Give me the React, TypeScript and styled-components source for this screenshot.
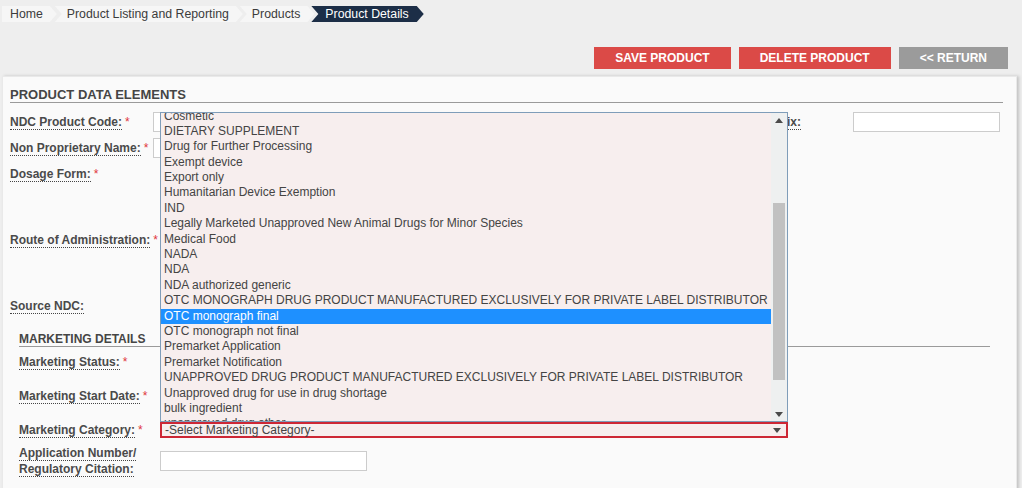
import React from 'react';
import styled, { createGlobalStyle } from 'styled-components';

const GlobalStyle = createGlobalStyle`
  html, body { margin: 0; padding: 0; background: #eeeeee; }
  body {
    font-family: "Liberation Sans", Arial, sans-serif;
    font-size: 12px;
    color: #444;
    overflow: hidden;
  }
  * { box-sizing: border-box; }
`;

const Page = styled.div`
  width: 1022px;
  height: 488px;
  overflow: hidden;
`;

const Breadcrumbs = styled.nav`
  display: flex;
  align-items: center;
  padding: 6px 0 0 2px;
`;

const Crumb = styled.span<{ $active?: boolean; $first?: boolean }>`
  display: flex;
  align-items: center;
  height: 16px;
  padding: 0 ${(p) => (p.$active ? 15 : 14)}px 0
    ${(p) => (p.$first ? 8 : p.$active ? 14 : 12)}px;
  margin-right: ${(p) => (p.$active ? 0 : p.$first ? -2 : -3)}px;
  font-size: 12.3px;
  white-space: nowrap;
  background: ${(p) => (p.$active ? '#1c2e47' : '#f6f6f6')};
  color: ${(p) => (p.$active ? '#ffffff' : '#3c3c3c')};
  clip-path: polygon(
    0 0,
    calc(100% - 7px) 0,
    100% 50%,
    calc(100% - 7px) 100%,
    0 100%,
    ${(p) => (p.$first ? '0' : '7px')} 50%
  );
`;

const ButtonBar = styled.div`
  display: flex;
  justify-content: flex-end;
  gap: 8px;
  margin-top: 25px;
  padding-right: 14px;
`;

const ActionButton = styled.button<{ $variant: 'danger' | 'muted' }>`
  height: 22px;
  padding: 0 21px;
  border: none;
  border-radius: 0;
  font-family: "Liberation Sans", Arial, sans-serif;
  font-size: 12px;
  font-weight: bold;
  color: #ffffff;
  background: ${(p) => (p.$variant === 'danger' ? '#db4a47' : '#9b9b9b')};
  cursor: pointer;
`;

const Panel = styled.section`
  margin: 7px 5px 0 2px;
  min-height: 420px;
  padding: 11px 13px 0 7px;
  background: #fafafa;
  border: 1px solid #e9e9e9;
  box-shadow: 2px 0 3px rgba(0, 0, 0, 0.18);
`;

const SectionTitle = styled.h2<{ $size?: number }>`
  margin: 0;
  font-size: ${(p) => p.$size ?? 13}px;
  line-height: 14px;
  font-weight: bold;
  color: #454545;
  text-transform: uppercase;
  border-bottom: 1px solid #9a9a9a;
`;

const Fields = styled.div`
  display: flex;
  flex-direction: column;
  gap: 6px;
  margin-top: 9px;
`;

const Row = styled.div<{ $h?: number; $align?: 'start' | 'center'; $mt?: number }>`
  display: flex;
  align-items: ${(p) => (p.$align === 'start' ? 'flex-start' : 'center')};
  min-height: ${(p) => p.$h ?? 20}px;
  margin-top: ${(p) => p.$mt ?? 0}px;
`;

const LabelCell = styled.label<{ $w: number }>`
  display: flex;
  align-items: center;
  flex-shrink: 0;
  width: ${(p) => p.$w}px;
  min-height: 20px;
  line-height: 16px;
  font-size: 12px;
  font-weight: bold;
  color: #4a4a4a;
`;

const LabelText = styled.div`
  white-space: nowrap;
`;

const FieldLabel = styled.span`
  border-bottom: 1px dotted #444;
`;

const Req = styled.span`
  margin-left: 3px;
  color: #e0353b;
  font-weight: normal;
`;

const TextInput = styled.input<{ $w: number; $ml?: number }>`
  width: ${(p) => p.$w}px;
  height: 20px;
  margin-left: ${(p) => p.$ml ?? 0}px;
  padding: 0 3px;
  border: 1px solid #cccccc;
  background: #ffffff;
  font-family: "Liberation Sans", Arial, sans-serif;
  font-size: 12px;
  outline: none;
`;

const TallBox = styled.div<{ $ml?: number }>`
  width: 300px;
  height: 60px;
  margin-left: ${(p) => p.$ml ?? 0}px;
  border: 1px solid #cccccc;
  background: #ffffff;
`;

const RightGroup = styled.div`
  display: flex;
  align-items: center;
  margin-left: auto;
  margin-right: 3px;
`;

const Marketing = styled.div`
  margin: 16px 13px 0 9px;
`;

const MarketingFields = styled.div`
  display: flex;
  flex-direction: column;
`;

const SelectWrap = styled.div`
  position: relative;
  width: 628px;
  height: 16px;
`;

const SelectBox = styled.div`
  display: flex;
  align-items: center;
  justify-content: space-between;
  height: 16px;
  padding: 0 5px 0 3px;
  border: 2px solid #cd2735;
  background: #f7eeee;
  font-size: 12px;
  line-height: 12px;
  color: #444;
`;

const Caret = styled.span<{ $up?: boolean }>`
  width: 0;
  height: 0;
  border-left: 4px solid transparent;
  border-right: 4px solid transparent;
  ${(p) =>
    p.$up ? 'border-bottom: 5px solid #4a4a4a;' : 'border-top: 5px solid #4a4a4a;'}
`;

const ListBox = styled.div`
  position: absolute;
  left: 0;
  bottom: 100%;
  z-index: 10;
  display: flex;
  width: 628px;
  height: 310px;
  border: 1px solid #7f9db9;
  background: #f7eeee;
`;

const OptionArea = styled.div`
  flex: 1;
  overflow: hidden;
`;

const OptionList = styled.ul`
  margin: -4.5px 0 0 0;
  padding: 0;
  list-style: none;
`;

const OptionItem = styled.li<{ $selected?: boolean }>`
  height: 15.4px;
  line-height: 15.4px;
  padding-left: 3px;
  white-space: nowrap;
  font-size: 12px;
  color: ${(p) => (p.$selected ? '#ffffff' : '#444444')};
  background: ${(p) => (p.$selected ? '#1e90ff' : 'transparent')};
`;

const ScrollBar = styled.div`
  display: flex;
  flex-direction: column;
  width: 16px;
  background: #eef0f0;
`;

const ScrollArrow = styled.div`
  display: flex;
  align-items: center;
  justify-content: center;
  height: 14px;
  flex-shrink: 0;
`;

const ScrollTrack = styled.div`
  flex: 1;
  padding: 0 2px;
`;

const ScrollThumb = styled.div`
  margin-top: 76px;
  height: 177px;
  background: #c1c1c1;
`;

const categories = [
  'Cosmetic',
  'DIETARY SUPPLEMENT',
  'Drug for Further Processing',
  'Exempt device',
  'Export only',
  'Humanitarian Device Exemption',
  'IND',
  'Legally Marketed Unapproved New Animal Drugs for Minor Species',
  'Medical Food',
  'NADA',
  'NDA',
  'NDA authorized generic',
  'OTC MONOGRAPH DRUG PRODUCT MANUFACTURED EXCLUSIVELY FOR PRIVATE LABEL DISTRIBUTOR',
  'OTC monograph final',
  'OTC monograph not final',
  'Premarket Application',
  'Premarket Notification',
  'UNAPPROVED DRUG PRODUCT MANUFACTURED EXCLUSIVELY FOR PRIVATE LABEL DISTRIBUTOR',
  'Unapproved drug for use in drug shortage',
  'bulk ingredient',
  'unapproved drug other',
];

const selected = 'OTC monograph final';

const Label: React.FC<{ w: number; required?: boolean; children: React.ReactNode }> = ({
  w,
  required,
  children,
}) => (
  <LabelCell $w={w}>
    <LabelText>
      <FieldLabel>{children}</FieldLabel>
      {required && <Req>*</Req>}
    </LabelText>
  </LabelCell>
);

export default function App() {
  return (
    <>
      <GlobalStyle />
      <Page>
        <Breadcrumbs>
          <Crumb $first>Home</Crumb>
          <Crumb>Product Listing and Reporting</Crumb>
          <Crumb>Products</Crumb>
          <Crumb $active>Product Details</Crumb>
        </Breadcrumbs>

        <ButtonBar>
          <ActionButton $variant="danger">SAVE PRODUCT</ActionButton>
          <ActionButton $variant="danger">DELETE PRODUCT</ActionButton>
          <ActionButton $variant="muted">&lt;&lt; RETURN</ActionButton>
        </ButtonBar>

        <Panel>
          <SectionTitle>Product Data Elements</SectionTitle>
          <Fields>
            <Row>
              <Label w={143} required>NDC Product Code:</Label>
              <TextInput $w={250} />
              <RightGroup>
                <Label w={138}>Product Suffix:</Label>
                <TextInput $w={147} />
              </RightGroup>
            </Row>
            <Row>
              <Label w={143} required>Non Proprietary Name:</Label>
              <TextInput $w={250} />
            </Row>
            <Row $h={60} $align="start">
              <Label w={143} required>Dosage Form:</Label>
              <TallBox $ml={12} />
            </Row>
            <Row $h={60} $align="start">
              <Label w={143} required>Route of Administration:</Label>
              <TallBox $ml={12} />
            </Row>
            <Row>
              <Label w={143}>Source NDC:</Label>
              <TextInput $w={200} $ml={12} />
            </Row>
          </Fields>

          <Marketing>
            <SectionTitle $size={12}>Marketing Details</SectionTitle>
            <MarketingFields>
              <Row $mt={5}>
                <Label w={141} required>Marketing Status:</Label>
                <TextInput $w={200} $ml={4} />
              </Row>
              <Row $mt={14}>
                <Label w={141} required>Marketing Start Date:</Label>
                <TextInput $w={200} $ml={4} />
              </Row>
              <Row $mt={14}>
                <Label w={141} required>Marketing Category:</Label>
                <SelectWrap>
                  <ListBox role="listbox">
                    <OptionArea>
                      <OptionList>
                        {categories.map((c) => (
                          <OptionItem key={c} $selected={c === selected} role="option">
                            {c}
                          </OptionItem>
                        ))}
                      </OptionList>
                    </OptionArea>
                    <ScrollBar>
                      <ScrollArrow>
                        <Caret $up />
                      </ScrollArrow>
                      <ScrollTrack>
                        <ScrollThumb />
                      </ScrollTrack>
                      <ScrollArrow>
                        <Caret />
                      </ScrollArrow>
                    </ScrollBar>
                  </ListBox>
                  <SelectBox>
                    <span>-Select Marketing Category-</span>
                    <Caret />
                  </SelectBox>
                </SelectWrap>
              </Row>
              <Row $mt={5}>
                <Label w={141}>
                  Application Number/
                  <br />
                  Regulatory Citation:
                </Label>
                <TextInput $w={207} />
              </Row>
            </MarketingFields>
          </Marketing>
        </Panel>
      </Page>
    </>
  );
}
